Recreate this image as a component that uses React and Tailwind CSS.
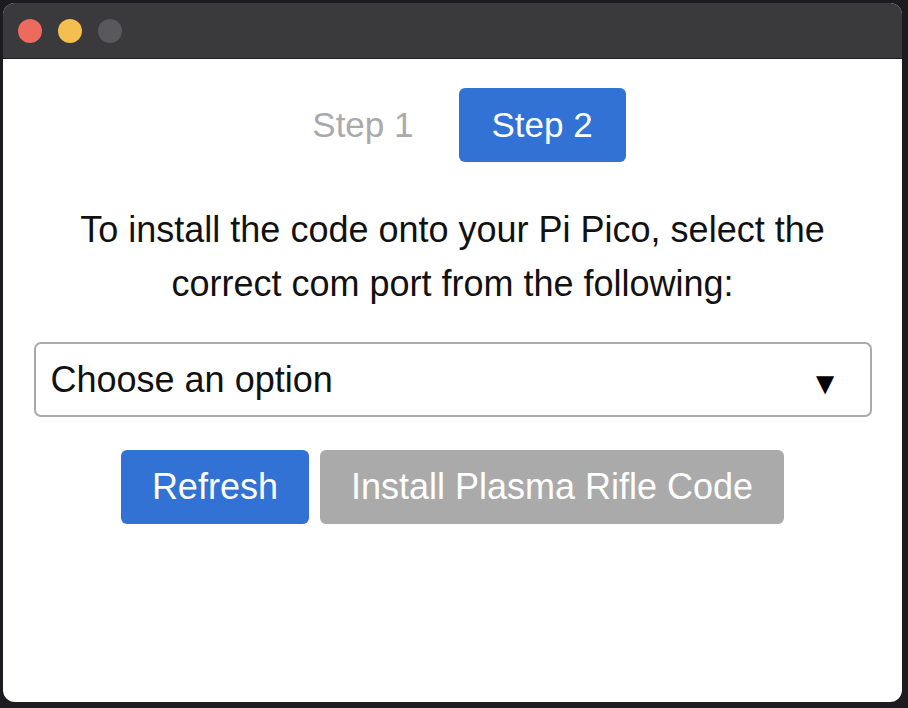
import React, { useState } from 'react';

const font = { fontFamily: '"Liberation Sans", Arial, Helvetica, sans-serif' };

export default function App() {
  const [step, setStep] = useState(2);
  const [port, setPort] = useState('');

  return (
    <div className="w-[908px] h-[708px] bg-[#1c1b1f] p-[3px] pr-[6px] pb-[6px]" style={font}>
      <div className="w-full h-full rounded-[12px] overflow-hidden bg-white flex flex-col">
        <div className="h-[56px] bg-[#3a393c] border-b border-[#1f1e21] flex items-center gap-[16px] pl-[15px] shrink-0">
          <span className="w-[24px] h-[24px] rounded-full bg-[#ec6a5e]" />
          <span className="w-[24px] h-[24px] rounded-full bg-[#f4bf4f]" />
          <span className="w-[24px] h-[24px] rounded-full bg-[#59585c]" />
        </div>

        <div className="flex flex-col items-center pt-[29px]">
          <div className="flex gap-[12px]">
            <button
              onClick={() => setStep(1)}
              className={`h-[74px] px-[33px] rounded-[6px] text-[35px] ${step === 1 ? 'bg-[#3272d5] text-white' : 'text-[#aaaaaa]'}`}
            >
              Step 1
            </button>
            <button
              onClick={() => setStep(2)}
              className={`h-[74px] px-[33px] rounded-[6px] text-[35px] ${step === 2 ? 'bg-[#3272d5] text-white' : 'text-[#aaaaaa]'}`}
            >
              Step 2
            </button>
          </div>

          <p className="mt-[41px] text-center text-[36px] leading-[54px] text-[#111111] w-[820px]">
            To install the code onto your Pi Pico, select the correct com port from the following:
          </p>

          <div className="mt-[31px] w-[838px] h-[75px] border-2 border-[#aaaaaa] rounded-[7px] relative flex items-center">
            <select
              value={port}
              onChange={(e) => setPort(e.target.value)}
              className="appearance-none w-full h-full bg-transparent pl-[15px] text-[36px] text-[#111111] outline-none"
            >
              <option value="">Choose an option</option>
            </select>
            <span className="absolute right-[29px] top-[22px] text-[31px] leading-[36px] text-black pointer-events-none">▼</span>
          </div>

          <div className="mt-[33px] flex gap-[11px]">
            <button className="h-[74px] px-[31px] rounded-[6px] bg-[#3272d5] text-white text-[36px]">
              Refresh
            </button>
            <button disabled className="h-[74px] px-[31px] rounded-[6px] bg-[#aaaaaa] text-white text-[36px]">
              Install Plasma Rifle Code
            </button>
          </div>
        </div>
      </div>
    </div>
  );
}
